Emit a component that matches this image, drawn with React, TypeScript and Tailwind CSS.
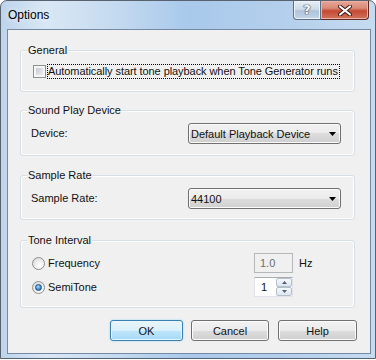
import React from "react";

function Group({ label, className, children }: { label: string; className?: string; children?: React.ReactNode }) {
  return (
    <div className={"relative ml-[12px] w-[335px] rounded-[3px] border border-[#d5dfe5] shadow-[inset_0_0_0_1px_#ffffff] " + (className ?? "")}>
      <span className="absolute left-[6px] top-[-8px] bg-[#f0f0f0] px-[1px] leading-[14px]">{label}</span>
      {children}
    </div>
  );
}

function Combo({ value }: { value: string }) {
  return (
    <div className="flex h-[21px] w-[153px] items-center justify-between rounded-[3px] border border-[#707070] bg-[linear-gradient(#f2f2f2_0%,#ebebeb_50%,#dddddd_50%,#cfcfcf_100%)] pl-[2px] pr-[4px] shadow-[inset_0_0_0_1px_#fbfbfb]">
      <span className="leading-[14px]">{value}</span>
      <svg width="7" height="4" viewBox="0 0 7 4">
        <path d="M0 0H7L3.5 4Z" fill="#000" />
      </svg>
    </div>
  );
}

function Radio({ checked }: { checked?: boolean }) {
  return (
    <div className="flex h-[13px] w-[13px] items-center justify-center rounded-full border border-[#8e8f8f] bg-[radial-gradient(circle_at_65%_70%,#ffffff_0%,#f0f0f0_40%,#cfd1d4_100%)]">
      {checked && (
        <div className="h-[7px] w-[7px] rounded-full border border-[#1b4f80] bg-[radial-gradient(circle_at_40%_35%,#b7e0fa_0%,#3b8ed6_55%,#1a5a9c_100%)]" />
      )}
    </div>
  );
}

function Button({ label, def, w }: { label: string; def?: boolean; w: string }) {
  return (
    <div
      className={
        "flex h-[21px] items-center justify-center rounded-[3px] border leading-[14px] " +
        w +
        " " +
        (def
          ? "border-[#3c7fb1] bg-[linear-gradient(#eaf6fd_0%,#d9f0fc_50%,#bee6fd_50%,#a7d9f5_100%)] shadow-[inset_0_0_0_1px_#e8f6fd,0_0_2px_#8fd3f5]"
          : "border-[#707070] bg-[linear-gradient(#f2f2f2_0%,#ebebeb_50%,#dddddd_50%,#cfcfcf_100%)] shadow-[inset_0_0_0_1px_#fcfcfc]")
      }
    >
      {label}
    </div>
  );
}

export default function App() {
  return (
    <div className="h-[360px] w-[376px] bg-white font-['Liberation_Sans',Arial,sans-serif] text-[11px] text-[#111111]">
      <div className="flex h-[359px] w-[376px] flex-col rounded-t-[7px] border border-[#59636f] bg-[linear-gradient(90deg,#bdd4ec_0%,#d9e7f5_12%,#c8dcf0_28%,#a9c9eb_50%,#b4cfec_75%,#c6dbf0_100%)]">
        {/* title bar */}
        <div className="flex h-[28px] shrink-0 justify-between pl-[7px] pr-[6px]">
          <span className="self-center text-[12px] leading-[16px] text-black [text-shadow:0_0_6px_#ffffff]">Options</span>
          <div className="flex h-[19px]">
            <div className="flex w-[28px] items-center justify-center rounded-bl-[4px] border border-t-0 border-[#5d6f86] bg-[linear-gradient(#e6eef6_0%,#cfdceb_45%,#aec3da_55%,#c3d5e8_100%)] shadow-[inset_0_0_0_1px_#eef4fa]">
              <span className="font-['DejaVu_Sans',sans-serif] text-[13px] font-bold leading-[14px] text-white [text-shadow:0_0_1px_#2d3a4a,0_0_1px_#2d3a4a,0_0_1px_#2d3a4a]">?</span>
            </div>
            <div className="flex w-[48px] items-center justify-center rounded-br-[4px] border border-l-0 border-t-0 border-[#5e2a22] bg-[linear-gradient(#e8a595_0%,#d98a78_40%,#c44a33_55%,#d2735f_100%)] shadow-[inset_0_0_0_1px_#eab3a6]">
              <svg width="16" height="11" viewBox="0 0 16 11">
                <path d="M3 1.5L13 9.5M13 1.5L3 9.5" stroke="#3b1510" strokeWidth="4" strokeLinecap="round" />
                <path d="M3 1.5L13 9.5M13 1.5L3 9.5" stroke="#ffffff" strokeWidth="2.2" strokeLinecap="round" />
              </svg>
            </div>
          </div>
        </div>
        {/* body */}
        <div className="flex flex-1 pb-[4px] pl-[6px] pr-[4px]">
          <div className="flex flex-1 flex-col border border-[#7389a4] bg-[#f0f0f0]">
            {/* General */}
            <Group label="General" className="mt-[20px] h-[42px] pl-[12px] pt-[13px]">
              <div className="flex h-[15px] items-center">
                <div className="h-[13px] w-[13px] border border-[#8e8f8f] bg-[#f6f6f6] p-[2px]">
                  <div className="h-full w-full bg-[linear-gradient(135deg,#c6cbd2,#eceef0)]" />
                </div>
                <span className="ml-[1px] h-[15px] border border-dotted border-black pr-[1px] leading-[13px] tracking-[-0.07px]">
                  Automatically start tone playback when Tone Generator runs
                </span>
              </div>
            </Group>
            {/* Sound Play Device */}
            <Group label="Sound Play Device" className="mt-[18px] h-[46px] pl-[10px] pt-[12px]">
              <div className="flex items-center">
                <span className="w-[157px]">Device:</span>
                <Combo value="Default Playback Device" />
              </div>
            </Group>
            {/* Sample Rate */}
            <Group label="Sample Rate" className="mt-[19px] h-[45px] pl-[10px] pt-[12px]">
              <div className="flex items-center">
                <span className="w-[157px]">Sample Rate:</span>
                <Combo value="44100" />
              </div>
            </Group>
            {/* Tone Interval */}
            <Group label="Tone Interval" className="mt-[20px] h-[68px] pl-[11px] pt-[12px]">
              <div className="flex h-[20px] items-center">
                <div className="flex w-[222px] items-center">
                  <Radio />
                  <span className="ml-[3px]">Frequency</span>
                </div>
                <div className="flex h-[20px] w-[39px] items-center border border-[#b5b8bb] bg-[#f0f0f0] pl-[5px] text-[#6d6d6d]">1.0</div>
                <span className="ml-[6px]">Hz</span>
              </div>
              <div className="mt-[4px] flex h-[20px] items-center">
                <div className="flex w-[222px] items-center">
                  <Radio checked />
                  <span className="ml-[3px]">SemiTone</span>
                </div>
                <div className="flex h-[20px] w-[39px] border border-[#e2e3ea] border-t-[#abadb3] bg-white">
                  <span className="flex-1 pl-[6px] leading-[18px]">1</span>
                  <div className="flex w-[16px] flex-col">
                    <div className="flex h-[9px] items-center justify-center rounded-[2px] border border-[#b4bfcc] bg-[linear-gradient(#f7f9fb,#dde5ee)]">
                      <svg width="5" height="3" viewBox="0 0 5 3"><path d="M0 3L2.5 0L5 3Z" fill="#4c5f80" /></svg>
                    </div>
                    <div className="flex h-[9px] items-center justify-center rounded-[2px] border border-[#b4bfcc] bg-[linear-gradient(#f7f9fb,#dde5ee)]">
                      <svg width="5" height="3" viewBox="0 0 5 3"><path d="M0 0L2.5 3L5 0Z" fill="#4c5f80" /></svg>
                    </div>
                  </div>
                </div>
              </div>
            </Group>
            {/* Buttons */}
            <div className="ml-[102px] mt-[12px] flex">
              <Button label="OK" def w="w-[73px]" />
              <div className="w-[8px]" />
              <Button label="Cancel" w="w-[78px]" />
              <div className="w-[9px]" />
              <Button label="Help" w="w-[79px]" />
            </div>
          </div>
        </div>
      </div>
    </div>
  );
}
